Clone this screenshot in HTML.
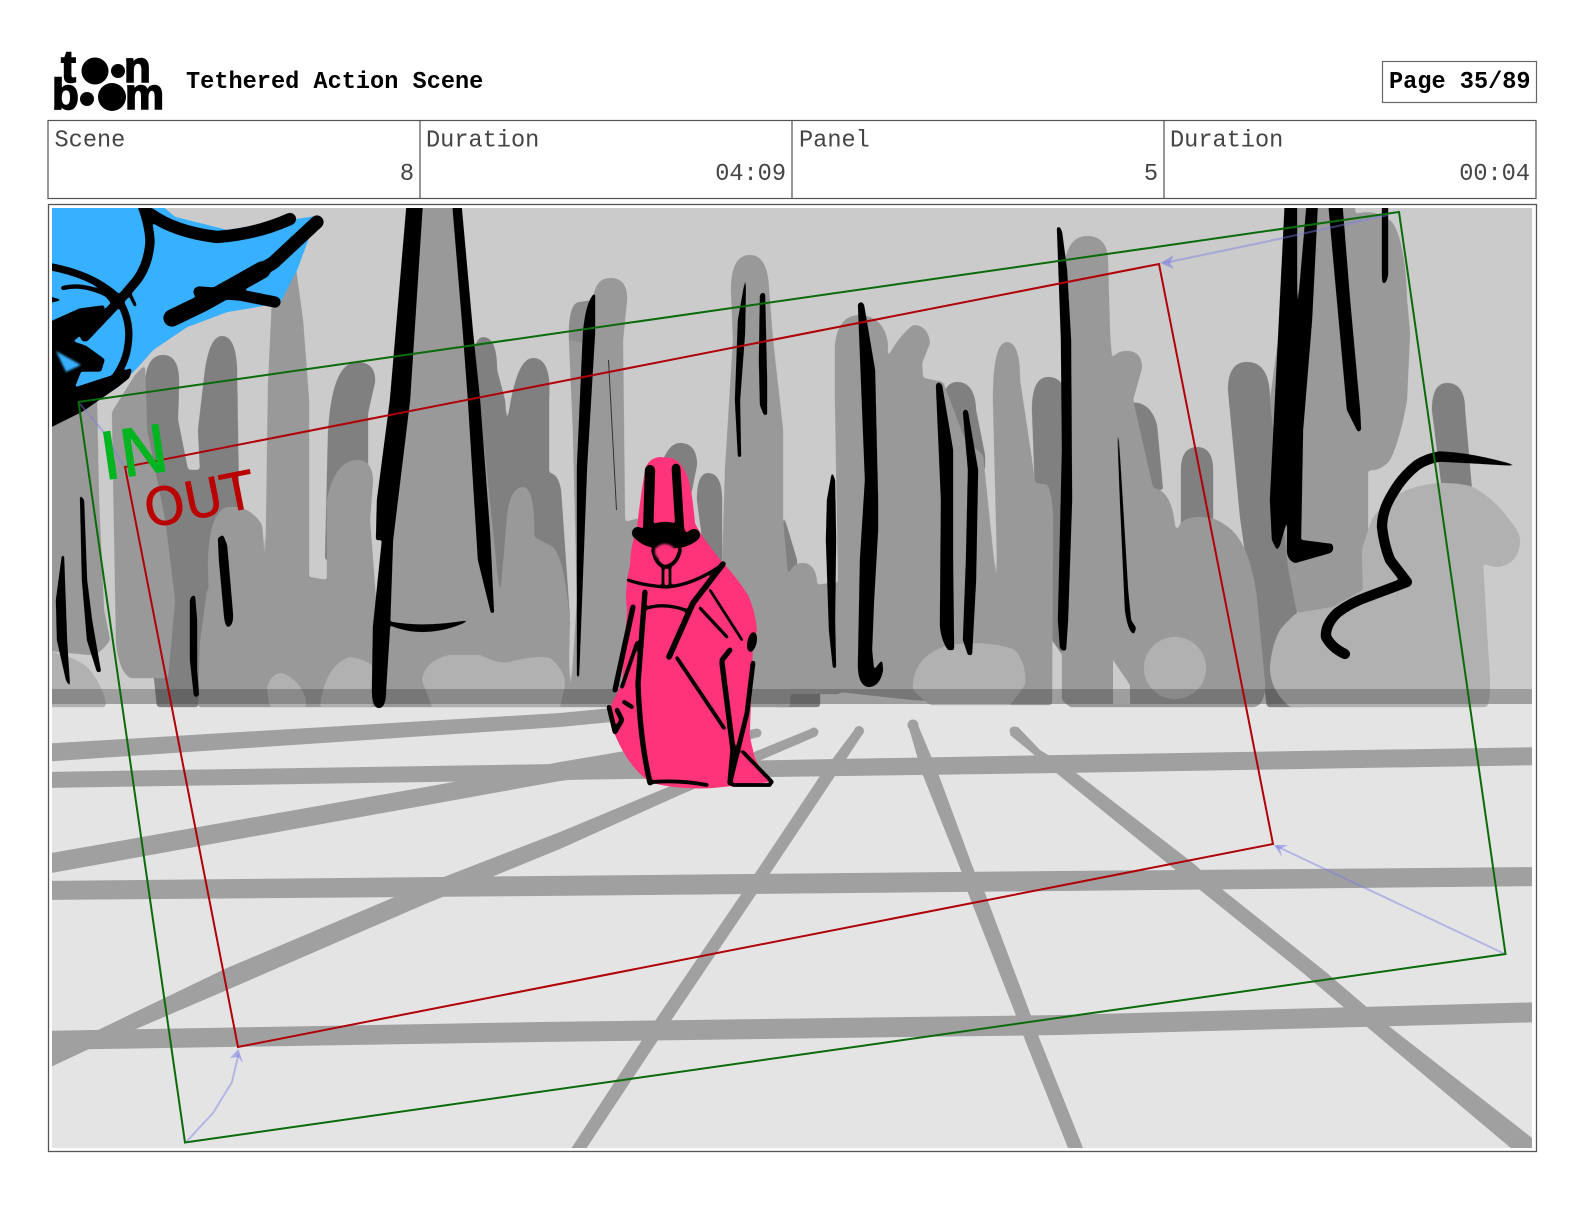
<!DOCTYPE html>
<html><head><meta charset="utf-8"><title>Tethered Action Scene</title>
<style>
html,body{margin:0;padding:0;background:#fff;width:1584px;height:1224px;overflow:hidden}
svg{display:block;position:absolute;left:0;top:0}
.m{font-family:"Liberation Mono",monospace;font-size:23.6px;fill:#444}
.b{font-weight:bold;fill:#000}
.r{text-anchor:end}
</style></head><body>
<svg width="1584" height="1224" viewBox="0 0 1584 1224" xmlns="http://www.w3.org/2000/svg">
<defs>
<clipPath id="c"><rect x="52" y="208" width="1480" height="940"/></clipPath>
<filter id="s" filterUnits="userSpaceOnUse" x="0" y="150" width="1584" height="1050" color-interpolation-filters="sRGB">
<feGaussianBlur stdDeviation="1.500"/>
<feComponentTransfer><feFuncA type="linear" slope="6" intercept="-2.300"/></feComponentTransfer>
</filter>
<filter id="k" filterUnits="userSpaceOnUse" x="0" y="150" width="1584" height="1050" color-interpolation-filters="sRGB">
<feGaussianBlur stdDeviation="1"/>
<feComponentTransfer><feFuncA type="linear" slope="5" intercept="-1.700"/></feComponentTransfer>
</filter>
</defs>
<rect width="1584" height="1224" fill="#fff"/>

<!-- logo -->
<g font-family="'Liberation Sans',sans-serif" font-weight="bold" fill="#000" stroke="#000" stroke-width="1.500">
<text x="61" y="82" font-size="45">t</text><text x="124" y="82" font-size="44">n</text><text x="52" y="109" font-size="44">b</text><text x="125" y="109" font-size="44">m</text>
</g>
<circle cx="95" cy="71" r="13.500"/><circle cx="118" cy="71" r="7"/><circle cx="87" cy="99" r="7"/><circle cx="112" cy="97" r="14"/>

<text class="m b" x="186" y="88">Tethered Action Scene</text>
<rect x="1382.500" y="61.500" width="154" height="41" fill="#fff" stroke="#666" stroke-width="1.200"/>
<text class="m b" x="1389" y="88">Page 35/89</text>

<!-- table -->
<rect x="48" y="120.500" width="1488" height="78" fill="#fff" stroke="#555" stroke-width="1.200"/>
<path d="M420 120V198M792 120V198M1164 120V198" stroke="#555" stroke-width="1.200"/>
<text class="m" x="54.500" y="146.500">Scene</text><text class="m" x="426" y="146.500">Duration</text><text class="m" x="799" y="146.500">Panel</text><text class="m" x="1170" y="146.500">Duration</text>
<text class="m r" x="414" y="180">8</text><text class="m r" x="786" y="180">04:09</text><text class="m r" x="1158" y="180">5</text><text class="m r" x="1530" y="180">00:04</text>

<rect x="48.500" y="204.500" width="1488" height="947" fill="#fff" stroke="#555" stroke-width="1.300"/>

<g clip-path="url(#c)">
<rect x="52" y="208" width="1480" height="496" fill="#cbcbcb"/>
<rect x="52" y="704" width="1480" height="444" fill="#e4e4e4"/>

<!-- dark trees -->
<g fill="#808080" filter="url(#s)">
<path d="M145,385Q146,355 163,355Q180,355 179,385L178,420L188,470L200,470L198,430L205,370Q210,336 222,336Q236,336 237,370L240,560L210,640L198,707L157,707L150,640L165,520L147,430Z"/>
<path d="M328,433Q332,362 357,362Q376,362 375,382L368,413L368,560L325,560Z"/>
<path d="M470,385Q472,337 483,337Q497,337 497,370L505,400L507,427Q515,358 533,358Q552,358 549,400L549,473Q558,473 561,490L570,620L500,620L475,590Z"/>
<path d="M943,400Q945,382 957,382Q975,382 976,410L985,455L985,470L950,470Z"/>
<path d="M1032,410Q1032,377 1048,377Q1065,377 1066,400L1066,660L1052,640L1035,490Z"/>
<path d="M1125,430L1130,403Q1150,400 1157,425L1163,490L1140,490Z"/>
<path d="M1181,470Q1181,447 1197,447Q1213,447 1213,470L1213,530L1181,530Z"/>
<path d="M1228,390Q1228,362 1247,362Q1270,362 1270,400L1290,570L1297,613L1307,707L1267,707L1240,517Z"/>
<path d="M1432,410Q1432,383 1447,383Q1465,383 1465,410L1472,490L1442,490Z"/>
<path d="M663,490L663,460Q670,443 680,443Q697,443 697,465L690,500Z"/>
<path d="M697,500Q697,473 708,473Q722,473 722,500L722,570L705,560Z"/>
<path d="M783,513L797,560L797,600L783,600Z"/>
<path d="M773,680L820,680L820,707L775,707Z"/>
</g>

<!-- mid trees -->
<g fill="#999" filter="url(#s)">
<path d="M40,420L85,400L97,400L99,500L104,610L110,640Q100,655 90,655L40,650Z"/>
<path d="M112,412L135,375L145,365L147,430L165,520L175,600L168,678L130,678Q118,670 116,640Z"/>
<path d="M208,560Q210,510 228,507Q250,505 262,525Q265,560 263,600L210,640Z"/>
<path d="M295,262L272,300L268,385L265,600L309,600L309,400L303,320Z"/>
<path d="M200,643L207,590L309,577L327,580L327,500Q335,460 358,460Q372,460 373,480L370,520L377,613L385,600L395,400L412,200L460,200L472,330L500,600L570,620L569,660L570,707L198,707Z"/>
<path d="M385,707L390,673L405,677L418,665L500,660L500,707Z"/>
<path d="M500,600L507,517Q510,487 523,487Q535,487 534,537L553,547Q565,560 570,625L500,640Z"/>
<path d="M569,340Q568,302 580,302L593,300Q595,278 610,278Q628,278 627,300L623,340L625,522L640,518L640,707L570,707L577,600L573,433Z"/>
<path d="M731,290Q731,255 750,255Q768,255 769,290L773,340L783,430L783,520L790,600L790,707L700,707L722,570L725,470L733,340Z"/>
<path d="M786,694L786,590Q788,563 802,563Q817,563 817,585L830,583L840,583L840,694Z"/>
<path d="M840,692L835,400L835,345Q838,315 860,315Q885,317 888,345L887,360Q895,340 913,325Q928,325 930,343L922,363L923,378L943,382L965,440L983,455L998,600L993,400Q993,342 1007,342Q1020,342 1020,380L1033,467L1035,483L1048,485Q1053,500 1053,520L1052,705L1013,705L913,700Z"/>
<path d="M1062,700L1062,640L1066,300L1065,260Q1070,236 1087,236Q1108,236 1108,262L1110,333L1112,360Q1115,351 1127,351Q1142,351 1142,368L1133,400L1153,488Q1172,490 1175,527L1178,530Q1180,517 1200,517Q1215,517 1225,525Q1250,540 1257,600L1265,683Q1265,707 1253,707L1070,707Z"/>
<path d="M1297,200L1355,200L1355,214Q1375,208 1392,222Q1405,240 1407,300L1410,333L1407,400Q1400,440 1390,460Q1380,472 1368,470L1368,600L1330,610L1297,613L1288,567L1270,400Z"/>
</g>
<path fill="#8c8c8c" d="M569,340Q568,302 580,302L595,300L595,345Z"/>
<path fill="#cbcbcb" d="M1113,660L1130,685L1130,704L1113,704Z"/>

<!-- light bushes -->
<g fill="#b1b1b1" filter="url(#s)">
<path d="M40,650Q75,655 90,670Q105,690 106,707L40,707Z"/>
<path d="M267,690Q270,673 282,673Q300,680 306,700L306,707L270,707Z"/>
<path d="M320,707Q325,665 350,657Q365,660 372,665L372,707Z"/>
<path d="M422,680Q425,660 450,655L480,655Q500,665 510,662Q535,655 550,658Q565,670 565,685L560,707L432,707Z"/>
<path d="M913,690Q912,655 950,645Q990,640 1015,650Q1027,665 1025,685L1010,705L930,705Z"/>
<path d="M1362,550Q1368,530 1373,517Q1390,498 1407,490Q1425,484 1440,483Q1460,483 1473,487Q1495,500 1507,517Q1520,532 1520,540Q1520,553 1513,560Q1505,567 1497,567Q1488,566 1483,563L1487,633L1490,680Q1490,700 1487,707L1290,707Q1270,690 1270,667Q1272,645 1280,630Q1288,620 1297,613L1333,607L1363,590Z"/>
<circle cx="1175" cy="668" r="31"/>
</g>

<!-- band -->
<rect x="52" y="689" width="1480" height="15" fill="#000" opacity=".22"/>

<!-- floor lines -->
<g fill="#a0a0a0">
<path d="M40,744L560,713L612,708L612,722L560,727L40,762Z"/>
<path d="M40,772L560,764L1060,755L1545,747L1545,765L1060,773L560,780L40,788Z"/>
<path d="M40,855L448,783L560,762L755,729L758,737L650,770L560,781L40,875Z"/>
<path d="M40,881L540,876L1060,871L1545,867L1545,886L1060,891L540,896L40,900Z"/>
<path d="M40,1031L540,1022L1060,1015L1545,1002L1545,1022L1060,1035L540,1042L40,1050Z"/>
<path d="M40,1055L98,1030L227,968L423,885L560,832L673,785L813,728L817,736L680,795L560,849L423,905L227,990L87,1050L40,1072Z"/>
<path d="M855,729L864,732L837,773L757,893L658,1040L580,1158L565,1158L642,1040L742,893L822,773Z"/>
<path d="M908,725L918,725L938,773L975,873L985,893L1030,1013L1040,1040L1087,1158L1072,1158L1025,1040L1015,1013L968,893L962,873L922,773Z"/>
<path d="M1012,727L1018,727L1040,750L1075,772L1193,863L1223,890L1327,973L1390,1027L1545,1148L1545,1160L1525,1160L1367,1027L1303,973L1200,890L1167,863L1055,772L1010,735Z"/>
<circle cx="859" cy="731" r="5"/><circle cx="913" cy="725" r="5.500"/><circle cx="1014" cy="731" r="4.500"/><circle cx="814" cy="732" r="4.500"/><circle cx="757" cy="733" r="4.500"/>
</g>

<!-- blue -->
<path fill="#37b0ff" filter="url(#k)" d="M40,200L155,200L175,217L227,230L317,216L297,270L280,303L227,312L187,327L153,350L138,367L118,387L85,408L40,430Z"/>

<g filter="url(#k)">
<!-- black sketch top-left -->
<g fill="none" stroke="#000" stroke-linecap="round" stroke-linejoin="round">
<path stroke-width="9" d="M140,200Q150,225 150,243Q148,265 137,280L120,300L85,337"/>
<path stroke-width="12" d="M150,214Q175,232 217,237Q257,234 290,219"/>
<path stroke-width="13" d="M317,222L273,263L230,288"/>
<path stroke-width="17" d="M262,270L230,288L203,303L172,318"/>
<path stroke-width="11" d="M199,292L240,295L275,302"/>
<path stroke-width="7" d="M40,265Q90,272 117,297Q132,320 128,345Q125,372 97,397"/>
<path stroke-width="4" d="M63,288Q83,283 107,295L117,307"/>
<path stroke-width="3" d="M128,290L135,305"/>
</g>
<path stroke="#000" stroke-width="3" stroke-linejoin="round" d="M40,328L80,310L103,307L88,327L70,342L85,347L103,360L100,370L80,370L72,390L118,375L130,370L128,377L118,385L82,410L40,431Z"/>
<path fill="#37b0ff" d="M56,351L81,365L66,372Z"/>
<path d="M40,294L62,300L40,305Z"/>

<!-- black sketch left -->
<path d="M62,555L64,556L67,640L70,687L66,680L57,640L56,600Z"/>
<path d="M80,495L84,500L87,580L92,620L101,672L97,672L87,640L82,580Z"/>
<path d="M218,538L223,535L227,545L233,615Q233,626 228,627Q225,626 224,615L219,560Z"/>
<path d="M190,600Q192,594 195,596L197,620L197,670L199,695Q197,698 194,696L190,660Z"/>
<path d="M407,200L423,200L410,400L393,540L390,627L386,690Q386,708 379,708Q372,708 372,690L373,627L382,540L376,540L377,500L390,400Z"/>
<path d="M452,200L461,200L473,333L480,400L490,533L494,613L491,613L478,560L468,400L463,333Z"/>
<path d="M373,620L392,622Q425,628 470,620Q440,635 410,631Q395,628 390,625Z"/>
<path d="M595,293L595,333L587,467L579,677L577,677L577,467L583,333Q586,300 595,293Z"/>
<path d="M746,275L745,333L740,400L741,457L738,457L735,400L738,320Z"/>
<path d="M760,295Q763,291 765,294L767,380L767,415L764,415L760,405L759,360Z"/>

<!-- black center/right -->
<path d="M858,304Q862,300 864,305L875,370L878,500L878,530L874,600L872,650L874,670L882,660L883,670Q880,687 868,687Q858,685 858,665L860,560L865,480Z"/>
<path d="M832,472L835,480L836,540L835,620L836,668L833,668L829,630L826,540L827,500Z"/>
<path d="M936,385Q938,380 942,385L953,450L953,560L954,650L948,650Q941,640 940,625L941,500Z"/>
<path d="M963,412Q966,407 968,412L978,470L976,580L972,655L968,655L963,640L966,560L968,470Z"/>
<path d="M1057,228Q1059,224 1062,232L1067,270L1071,340L1072,500L1068,620L1066,650Q1063,652 1060,648L1058,620L1062,450L1061,340Z"/>
<path d="M1117,427L1119,440L1128,590L1131,620L1136,628L1134,634Q1128,632 1125,610L1120,500Z"/>
<path d="M1285,200L1297,200L1297,400L1294,470L1287,520L1280,545L1277,550L1272,540L1270,500L1275,400Z"/>
<path d="M1307,200L1318,200L1312,320L1303,430L1301,540L1332,544Q1335,550 1330,553L1295,563Q1287,560 1287,550L1288,470L1295,340Z"/>
<path d="M1328,200L1342,200L1350,300L1360,410L1361,430L1358,432L1347,410L1337,300Z"/>
<path d="M1382,200L1388,200L1388,275Q1386,285 1383,283Q1382,283 1382,270Z"/>
<g fill="none" stroke="#000" stroke-linecap="round" stroke-linejoin="round">
<path stroke-width="10" d="M1440,456.500Q1428,458 1417,465Q1402,477 1393,493Q1382,510 1382,527Q1384,545 1390,560L1407,582L1367,597Q1350,603 1337,613Q1325,625 1326,637Q1332,648 1345,654"/>
</g>
<path d="M1438,451.500Q1470,452 1518,466Q1470,463 1438,461.500Z"/>
</g>
<path fill="#333" d="M608,360L609,360L617,510L616,510Z"/>

<!-- figure -->
<path fill="#ff337a" d="M660,457Q648,458 645,470Q640,500 637,527Q630,548 630,565Q624,590 627,610L622,683L610,707Q610,725 615,735Q630,770 652,783Q680,790 713,788L772,782Q755,765 753,750Q749,735 750,730L753,643L757,630Q755,610 748,595Q735,575 723,563Q700,535 695,523Q692,490 688,478Q682,462 672,458Z"/>
<g filter="url(#k)">
<g fill="none" stroke="#000" stroke-linecap="round" stroke-linejoin="round">
<path stroke-width="10" d="M650,470L648,535"/>
<path stroke-width="8.500" d="M676,468L680,532"/>
<path stroke-width="12" d="M638,533Q650,545 665,540Q682,545 694,535"/>
<path stroke-width="3.500" d="M653,550Q656,565 665,567Q677,565 680,550"/>
<path stroke-width="2.500" d="M663,567V585M670,567V585"/>
<path stroke-width="3" d="M628,580Q645,586 667,587Q693,585 722,565"/>
<path stroke-width="5.500" d="M723,564L693,603L669,657"/>
<path stroke-width="3.500" d="M677,658L724,728"/>
<path stroke-width="5" d="M645,592L638,683Q640,740 650,783"/>
<path stroke-width="5" d="M633,607L615,690"/>
<path stroke-width="3.500" d="M637,643L622,687"/>
<path stroke-width="3" d="M647,608Q667,602 690,612"/>
<path stroke-width="3" d="M700,608L727,637"/>
<path stroke-width="2.500" d="M710,590L742,640"/>
<path stroke-width="5" d="M730,650L722,660"/>
<path stroke-width="5" d="M722,663L733,750L730,783"/>
<path stroke-width="4.500" d="M753,663L747,713L730,782"/>
<path stroke-width="3.500" d="M743,752L772,782"/>
<path stroke-width="3.500" d="M733,785L770,785M653,782Q680,780 707,785"/>
<path stroke-width="4.500" d="M609,707L615,732L622,720L617,710"/>
<path stroke-width="4" d="M624,702L632,707"/>
</g>
<ellipse cx="665" cy="534" rx="21" ry="12"/>
<ellipse cx="665" cy="552" rx="10" ry="8" fill="#ff337a"/>
<ellipse cx="752" cy="642" rx="4.500" ry="10" transform="rotate(12 752 642)"/>
</g>

<!-- motion arrows -->
<g fill="none" stroke="#7a7ae6" stroke-opacity=".45" stroke-width="2">
<path d="M80,404L102,430L123,465"/>
<path d="M1388,215L1260,243L1164,263"/>
<path d="M1505,954L1276,846"/>
<path d="M187,1141L213,1113L232,1082L238.500,1054"/>
</g>
<g fill="#7a7ae6" fill-opacity=".55">
<path d="M1160,263L1174,255L1170,263L1174,269Z"/>
<path d="M1274,845L1288,845L1280,849L1282,857Z"/>
<path d="M238.500,1049L243,1063L238,1057L230,1058Z"/>
</g>

<!-- camera frames -->
<path d="M78.500,402L1399,212L1505.500,954L185,1142.500Z" fill="none" stroke="#0a6b0a" stroke-width="2"/>
<path d="M125,467L1159,264L1273,844L238,1047Z" fill="none" stroke="#b00008" stroke-width="2"/>
<text transform="translate(104 480) rotate(-8.2)" font-family="'DejaVu Sans',sans-serif" font-size="65" fill="#00b520" stroke="#00b520" stroke-width="1">IN</text>
<text transform="translate(148 528) rotate(-11.1)" font-family="'DejaVu Sans',sans-serif" font-size="52" fill="#bb0000" stroke="#bb0000" stroke-width=".6">OUT</text>
</g>
</svg>
</body></html>
